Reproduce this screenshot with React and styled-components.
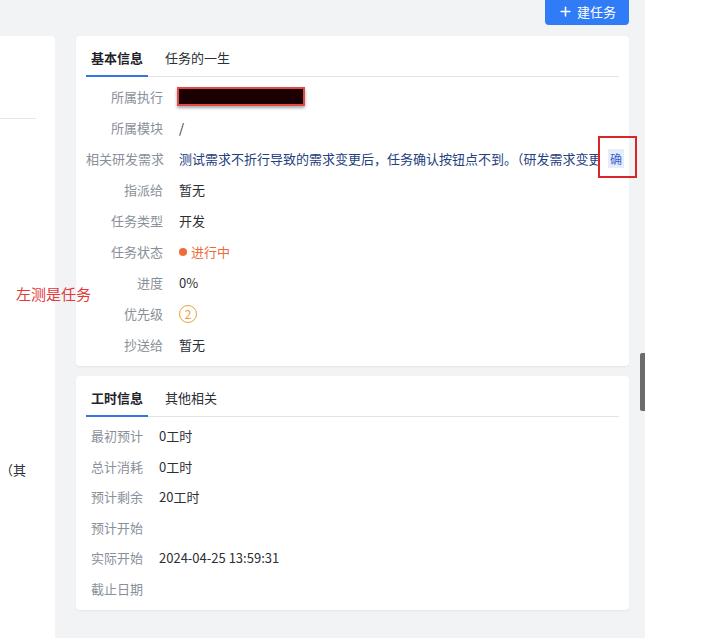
import styled, { createGlobalStyle } from "styled-components";
import { Plus } from "lucide-react";

const GlobalStyle = createGlobalStyle`
  html, body {
    margin: 0;
    padding: 0;
    background: #ffffff;
  }
  body {
    font-family: "Noto Sans CJK SC", "Noto Sans", "Liberation Sans", sans-serif;
    font-size: 13px;
    color: #2b2f36;
  }
`;

const basicInfo = [
  { label: "所属执行", kind: "redacted" },
  { label: "所属模块", value: "/" },
  { label: "相关研发需求", kind: "story" },
  { label: "指派给", value: "暂无" },
  { label: "任务类型", value: "开发" },
  { label: "任务状态", kind: "status" },
  { label: "进度", value: "0%" },
  { label: "优先级", kind: "priority" },
  { label: "抄送给", value: "暂无" },
];

const hourInfo = [
  { label: "最初预计", value: "0工时" },
  { label: "总计消耗", value: "0工时" },
  { label: "预计剩余", value: "20工时" },
  { label: "预计开始", value: "" },
  { label: "实际开始", value: "2024-04-25 13:59:31" },
  { label: "截止日期", value: "" },
];

function Tabs({ items }) {
  return (
    <TabBar>
      {items.map((t, i) => (
        <Tab key={t} $active={i === 0}>
          {t}
        </Tab>
      ))}
    </TabBar>
  );
}

function BasicValue({ item }) {
  if (item.kind === "redacted") return <Redacted />;
  if (item.kind === "status")
    return (
      <Status>
        <Dot />
        进行中
      </Status>
    );
  if (item.kind === "priority") return <Priority>2</Priority>;
  if (item.kind === "story")
    return (
      <StoryValue>
        <StoryText>
          测试需求不折行导致的需求变更后，任务确认按钮点不到。（研发需求变更）
        </StoryText>
        <TagWrap>
          <Tag>确</Tag>
          <Highlight />
        </TagWrap>
      </StoryValue>
    );
  return <Value>{item.value}</Value>;
}

export default function App() {
  return (
    <>
      <GlobalStyle />
      <Page>
        <Main>
          <Toolbar>
            <CreateButton>
              <Plus size={15} strokeWidth={2.4} />
              建任务
            </CreateButton>
          </Toolbar>
          <Content>
            <LeftPanel>
              <LeftDivider />
              <LeftText>（其</LeftText>
            </LeftPanel>
            <RightColumn>
              <Card>
                <Tabs items={["基本信息", "任务的一生"]} />
                <Rows>
                  {basicInfo.map((item) => (
                    <InfoRow key={item.label}>
                      <Label $width={77} $align="right">
                        {item.label}
                      </Label>
                      <BasicValue item={item} />
                    </InfoRow>
                  ))}
                </Rows>
              </Card>
              <Card>
                <Tabs items={["工时信息", "其他相关"]} />
                <Rows $indent={5}>
                  {hourInfo.map((item) => (
                    <InfoRow key={item.label} $height={30.5}>
                      <Label $width={52}>{item.label}</Label>
                      <Value>{item.value}</Value>
                    </InfoRow>
                  ))}
                </Rows>
              </Card>
            </RightColumn>
          </Content>
          <Note>左测是任务</Note>
          <ScrollThumb />
        </Main>
        <Blank />
      </Page>
    </>
  );
}

const Page = styled.div`
  display: flex;
  height: 638px;
  overflow: hidden;
`;

const Main = styled.div`
  position: relative;
  width: 645px;
  flex-shrink: 0;
  background: #f2f3f5;
  padding-right: 16px;
  box-sizing: border-box;
`;

const Blank = styled.div`
  flex: 1;
  background: #ffffff;
`;

const Toolbar = styled.div`
  display: flex;
  justify-content: flex-end;
  height: 25px;
  margin-bottom: 11px;
`;

const CreateButton = styled.button`
  display: flex;
  align-items: center;
  gap: 4px;
  height: 25px;
  padding: 0 13px 2px 13px;
  border: none;
  border-radius: 0 0 4px 4px;
  background: #2f7cf6;
  color: #ffffff;
  font-family: inherit;
  font-size: 13px;
  line-height: 20px;
  cursor: pointer;
`;

const Content = styled.div`
  display: flex;
  gap: 21px;
  align-items: flex-start;
`;

const LeftPanel = styled.div`
  width: 55px;
  height: 620px;
  flex-shrink: 0;
  background: #ffffff;
  border-radius: 0 4px 0 0;
  padding-top: 82px;
  box-sizing: border-box;
  overflow: hidden;
`;

const LeftDivider = styled.div`
  width: 36px;
  height: 1px;
  background: #e4e6eb;
`;

const LeftText = styled.div`
  margin-top: 341px;
  white-space: nowrap;
  line-height: 20px;
  font-size: 13px;
  color: #2b2f36;
`;

const RightColumn = styled.div`
  width: 553px;
  display: flex;
  flex-direction: column;
  gap: 10px;
`;

const Card = styled.div`
  background: #ffffff;
  border-radius: 4px;
  box-shadow: 0 1px 2px rgba(0, 0, 0, 0.06);
  padding: 0 10px 6px;
`;

const TabBar = styled.div`
  display: flex;
  gap: 12px;
  border-bottom: 1px solid #e2e4e9;
`;

const Tab = styled.div`
  padding: 12px 5px 7px;
  line-height: 20px;
  font-size: 13px;
  font-weight: ${(p) => (p.$active ? 700 : 400)};
  color: ${(p) => (p.$active ? "#1f2329" : "#2b2f36")};
  border-bottom: 2px solid ${(p) => (p.$active ? "#3574e6" : "transparent")};
  margin-bottom: -1px;
`;

const Rows = styled.div`
  margin-top: 4px;
  padding-left: ${(p) => p.$indent || 0}px;
`;

const InfoRow = styled.div`
  display: flex;
  align-items: center;
  gap: 16px;
  height: ${(p) => p.$height || 31}px;
`;

const Label = styled.div`
  width: ${(p) => p.$width}px;
  flex-shrink: 0;
  text-align: ${(p) => p.$align || "left"};
  color: #8a909a;
  white-space: nowrap;
  line-height: 20px;
`;

const Value = styled.div`
  color: #2b2f36;
  line-height: 20px;
  white-space: nowrap;
`;

const Redacted = styled.div`
  width: 124px;
  height: 15px;
  margin-left: -2px;
  background: #1a0000;
  border: 2px solid #e04a4a;
  box-shadow: 0 2px 3px rgba(0, 0, 0, 0.35);
`;

const StoryValue = styled.div`
  flex: 1;
  min-width: 0;
  display: flex;
  align-items: center;
  gap: 8px;
  margin-right: -5px;
`;

const StoryText = styled.div`
  flex: 1;
  min-width: 0;
  overflow: hidden;
  white-space: nowrap;
  color: #24407e;
  line-height: 20px;
`;

const TagWrap = styled.div`
  position: relative;
  flex-shrink: 0;
`;

const Tag = styled.div`
  width: 16px;
  height: 19px;
  background: #e4edfc;
  color: #4062c8;
  font-size: 12px;
  line-height: 19px;
  text-align: center;
  overflow: hidden;
`;

const Highlight = styled.div`
  position: absolute;
  left: -10px;
  top: -13px;
  width: 39px;
  height: 42px;
  border: 2px solid #d8262b;
  box-sizing: border-box;
`;

const Status = styled.div`
  display: flex;
  align-items: center;
  gap: 4px;
  color: #ee6a3c;
  line-height: 20px;
`;

const Dot = styled.span`
  width: 8px;
  height: 8px;
  border-radius: 50%;
  background: #f06b3a;
`;

const Priority = styled.div`
  width: 16px;
  height: 16px;
  border: 1px solid #e6a23c;
  border-radius: 50%;
  color: #e6a23c;
  font-size: 12px;
  line-height: 16px;
  text-align: center;
`;

const Note = styled.div`
  position: absolute;
  left: 16px;
  top: 284px;
  color: #e23a3a;
  font-size: 15px;
  line-height: 20px;
  white-space: nowrap;
`;

const ScrollThumb = styled.div`
  position: absolute;
  right: 0;
  top: 353px;
  width: 5px;
  height: 58px;
  background: #6b6b6b;
  border-radius: 2px 0 0 2px;
`;
